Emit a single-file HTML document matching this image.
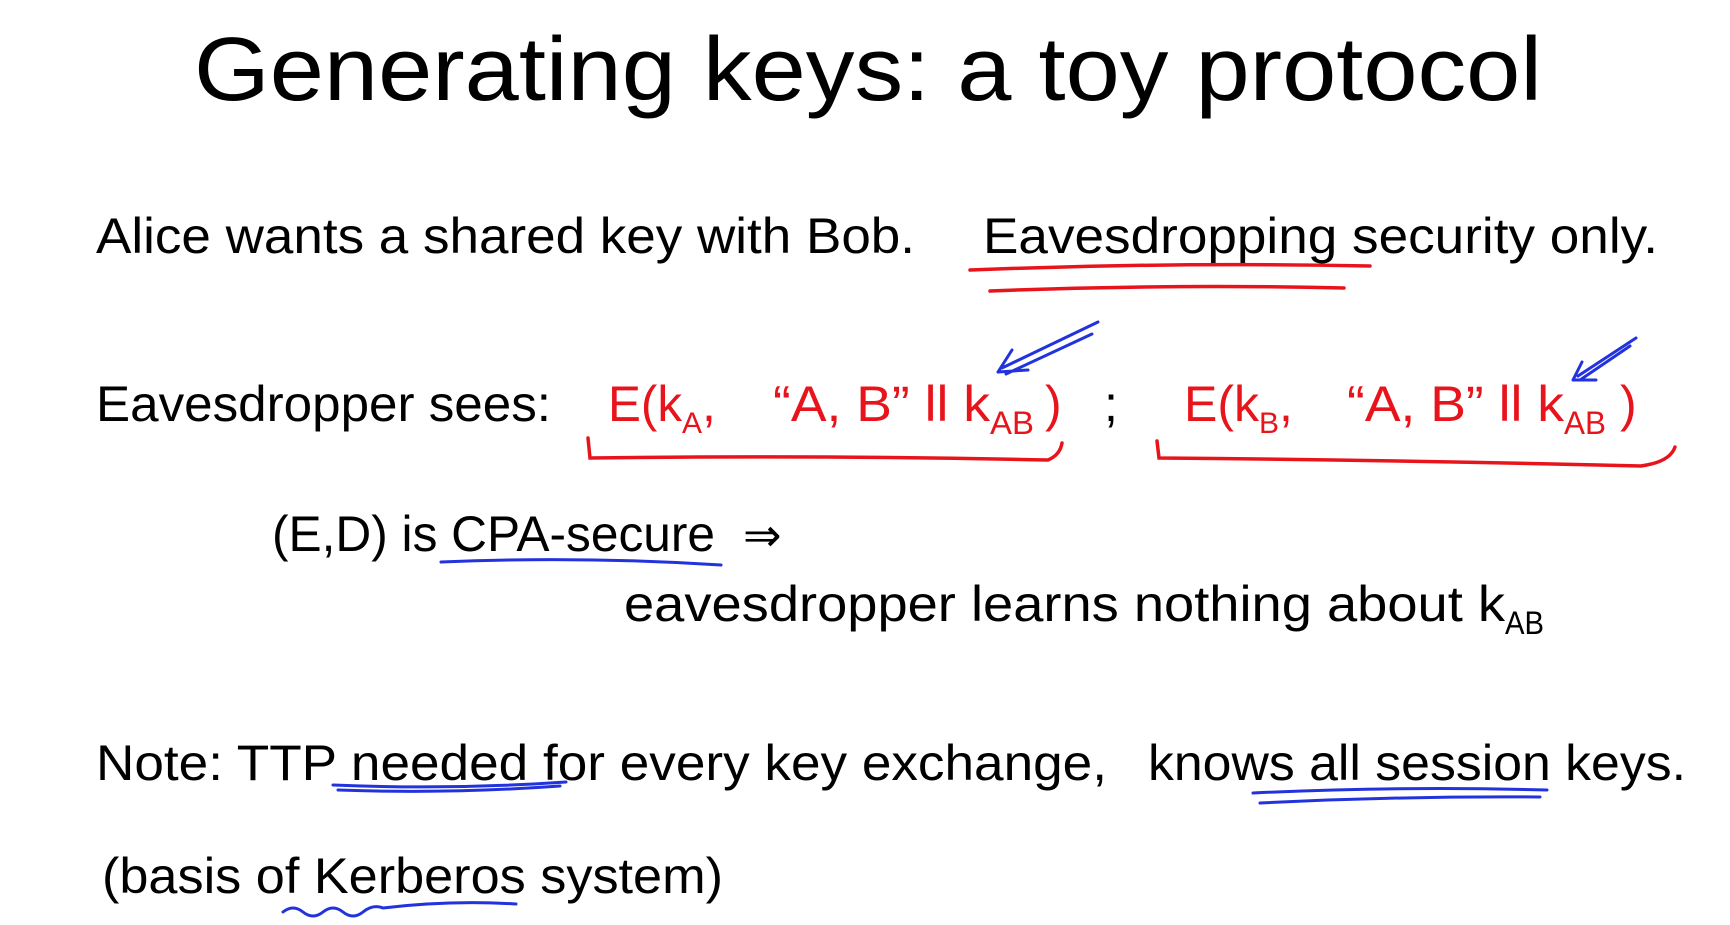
<!DOCTYPE html>
<html><head><meta charset="utf-8"><style>html,body{margin:0;padding:0;background:#fff;width:1730px;height:925px;overflow:hidden}</style></head>
<body>
<svg width="1730" height="925" viewBox="0 0 1730 925" xmlns="http://www.w3.org/2000/svg" font-family="Liberation Sans, sans-serif">
<g fill="#000">
<text x="194" y="100" font-size="90" textLength="1348" lengthAdjust="spacingAndGlyphs">Generating keys: a toy protocol</text>
<text x="96" y="253" font-size="50" textLength="819" lengthAdjust="spacingAndGlyphs">Alice wants a shared key with Bob.</text>
<text x="983" y="253" font-size="50" textLength="675" lengthAdjust="spacingAndGlyphs">Eavesdropping security only.</text>
<text x="96" y="421" font-size="50" textLength="455" lengthAdjust="spacingAndGlyphs">Eavesdropper sees:</text>
<text x="1104" y="421" font-size="50">;</text>
<text x="272" y="551" font-size="50" textLength="443" lengthAdjust="spacingAndGlyphs">(E,D) is CPA-secure</text>
<text x="743" y="551" font-size="46">⇒</text>
<text x="624" y="621" font-size="50" textLength="881" lengthAdjust="spacingAndGlyphs">eavesdropper learns nothing about k</text>
<text x="1505" y="634" font-size="32" textLength="39" lengthAdjust="spacingAndGlyphs">AB</text>
<text x="96" y="780" font-size="50" textLength="1011" lengthAdjust="spacingAndGlyphs">Note:  TTP needed for every key exchange,</text>
<text x="1148" y="780" font-size="50" textLength="538" lengthAdjust="spacingAndGlyphs">knows all session keys.</text>
<text x="102" y="893" font-size="50" textLength="621" lengthAdjust="spacingAndGlyphs">(basis of Kerberos system)</text>
</g>
<g fill="#e8141c">
<text x="608" y="421" font-size="50" textLength="74" lengthAdjust="spacingAndGlyphs">E(k</text>
<text x="682" y="433" font-size="30">A</text>
<text x="702" y="421" font-size="50">,</text>
<text x="773" y="421" font-size="50" textLength="217" lengthAdjust="spacingAndGlyphs">“A, B” ll k</text>
<text x="990" y="434" font-size="32" textLength="44" lengthAdjust="spacingAndGlyphs">AB</text>
<text x="1045" y="421" font-size="50">)</text>
<text x="1184" y="421" font-size="50" textLength="75" lengthAdjust="spacingAndGlyphs">E(k</text>
<text x="1259" y="433" font-size="30">B</text>
<text x="1279" y="421" font-size="50">,</text>
<text x="1347" y="421" font-size="50" textLength="217" lengthAdjust="spacingAndGlyphs">“A, B” ll k</text>
<text x="1564" y="434" font-size="32" textLength="42" lengthAdjust="spacingAndGlyphs">AB</text>
<text x="1620" y="421" font-size="50">)</text>
</g>
<g fill="none" stroke="#e8141c" stroke-width="3.5" stroke-linecap="round">
<path d="M970 270 Q1170 262 1370 266"/>
<path d="M990 291 Q1170 284 1344 288"/>
<path d="M588 438 L590 458 Q820 455 1048 460 Q1060 455 1062 443"/>
<path d="M1157 441 L1159 458 Q1400 460 1641 466 Q1670 462 1675 447"/>
</g>
<g fill="none" stroke="#2233dd" stroke-width="3" stroke-linecap="round">
<path d="M1098 322 L1002 368 M1092 334 L1006 374 M998 372 L1012 350 M998 372 L1028 370"/>
<path d="M1636 338 L1578 376 M1630 346 L1580 380 M1573 380 L1582 362 M1573 380 L1596 380"/>
<path d="M441 562 Q580 556 721 565"/>
<path d="M333 785 Q450 790 566 782"/>
<path d="M338 790 Q450 794 560 786"/>
<path d="M1253 793 Q1400 786 1547 790"/>
<path d="M1260 803 Q1400 796 1540 797"/>
<path d="M283 912 q10 -8 20 0 t20 0 t20 0 t20 0 t20 -4 Q450 900 516 904"/>
</g>
</svg>
</body></html>
